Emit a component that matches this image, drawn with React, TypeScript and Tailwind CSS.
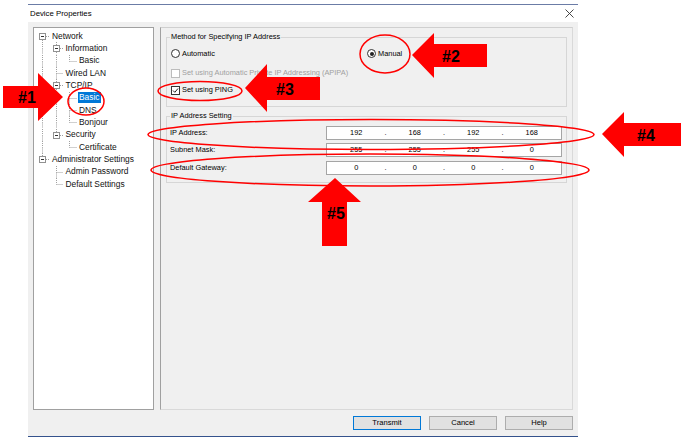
import React from "react";

type Cell = "pipe" | "tee" | "ell" | "blank" | "box-d" | "box-u" | "box-ud";

const TREE: { label: string; cells: Cell[]; selected?: boolean }[] = [
  { label: "Network", cells: ["box-d"] },
  { label: "Information", cells: ["pipe", "box-ud"] },
  { label: "Basic", cells: ["pipe", "pipe", "ell"] },
  { label: "Wired LAN", cells: ["pipe", "tee"] },
  { label: "TCP/IP", cells: ["pipe", "box-ud"] },
  { label: "Basic", cells: ["pipe", "pipe", "tee"], selected: true },
  { label: "DNS", cells: ["pipe", "pipe", "tee"] },
  { label: "Bonjour", cells: ["pipe", "pipe", "ell"] },
  { label: "Security", cells: ["pipe", "box-u"] },
  { label: "Certificate", cells: ["pipe", "blank", "ell"] },
  { label: "Administrator Settings", cells: ["box-u"] },
  { label: "Admin Password", cells: ["blank", "tee"] },
  { label: "Default Settings", cells: ["blank", "ell"] },
];

const W = 13.5;
const H = 12.33;

function TreeCell({ kind }: { kind: Cell }) {
  const cx = 6.5;
  const cy = 6.5;
  const dot = { stroke: "#a0a0a0", strokeWidth: 1, strokeDasharray: "1 1" };
  const isBox = kind.startsWith("box");
  const up = kind === "pipe" || kind === "tee" || kind === "ell" || kind === "box-u" || kind === "box-ud";
  const down = kind === "pipe" || kind === "tee" || kind === "box-d" || kind === "box-ud";
  const right = kind === "tee" || kind === "ell" || isBox;
  return (
    <svg width={W} height={H} className="shrink-0">
      {up && <line x1={cx} y1={0} x2={cx} y2={isBox ? cy - 3.5 : cy} {...dot} />}
      {down && <line x1={cx} y1={isBox ? cy + 3.5 : cy} x2={cx} y2={H} {...dot} />}
      {right && <line x1={isBox ? cx + 3.5 : cx} y1={cy} x2={W} y2={cy} {...dot} />}
      {isBox && (
        <>
          <rect x={cx - 3} y={cy - 3} width={6} height={6} fill="#fff" stroke="#919191" strokeWidth={1} />
          <line x1={cx - 1.5} y1={cy} x2={cx + 1.5} y2={cy} stroke="#333" strokeWidth={1} />
        </>
      )}
    </svg>
  );
}

function Radio({ checked = false }: { checked?: boolean }) {
  return (
    <span className="flex h-[9px] w-[9px] items-center justify-center rounded-full border border-[#333] bg-white">
      {checked && <span className="h-[4px] w-[4px] rounded-full bg-[#222]" />}
    </span>
  );
}

function Check({ checked = false, disabled = false }: { checked?: boolean; disabled?: boolean }) {
  return (
    <span
      className={`flex h-[9px] w-[9px] items-center justify-center border bg-white ${
        disabled ? "border-[#bcbcbc]" : "border-[#333]"
      }`}
    >
      {checked && (
        <svg width="7" height="7" viewBox="0 0 7 7">
          <path d="M1 3.5 L2.8 5.3 L6 1.5" fill="none" stroke="#222" strokeWidth="1" />
        </svg>
      )}
    </span>
  );
}

function IpBox({ values }: { values: string[] }) {
  return (
    <div className="flex h-[14px] w-[236px] items-center border border-[#a5a5a5] bg-white">
      {values.map((v, i) => (
        <React.Fragment key={i}>
          {i > 0 && <span className="flex w-0 justify-center">.</span>}
          <span className="flex-1 text-center">{v}</span>
        </React.Fragment>
      ))}
    </div>
  );
}

function Button({ label, primary = false }: { label: string; primary?: boolean }) {
  return (
    <button
      type="button"
      className={`h-[14px] w-[68px] bg-[#e1e1e1] text-[7.6px] leading-none ${
        primary ? "border border-[#0078d7]" : "border border-[#adadad]"
      }`}
    >
      {label}
    </button>
  );
}

function Annotations() {
  const red = "#ff0000";
  const txt = { fontFamily: "'Liberation Sans', Arial, sans-serif", fontWeight: 700, fontSize: 16, fill: "#000" };
  return (
    <svg className="pointer-events-none absolute inset-0" width="691" height="441">
      <g fill="none" stroke={red} strokeWidth="1.5">
        <ellipse cx="86" cy="101.5" rx="18" ry="13.5" />
        <ellipse cx="385" cy="54" rx="25" ry="19" />
        <ellipse cx="200" cy="91" rx="42" ry="9.5" />
        <ellipse cx="371" cy="134.5" rx="223" ry="15" />
        <ellipse cx="370" cy="170" rx="219" ry="16" />
      </g>
      <g fill={red}>
        <polygon points="3,86 38,86 38,73 63,97 38,121 38,108 3,108" />
        <polygon points="412,55 434,33 434,44 487,44 487,67 434,67 434,78" />
        <polygon points="245,88 267,64 267,77 320,77 320,100 267,100 267,112" />
        <polygon points="602,134 624,112 624,123 681,123 681,146 624,146 624,157" />
        <polygon points="335,178 361,202 347,202 347,246 322,246 322,202 308,202" />
      </g>
      <g textAnchor="middle" dominantBaseline="central">
        <text x="27" y="97.5" {...txt}>#1</text>
        <text x="451" y="56" {...txt}>#2</text>
        <text x="285" y="89" {...txt}>#3</text>
        <text x="646" y="135" {...txt}>#4</text>
        <text x="336" y="213" {...txt}>#5</text>
      </g>
    </svg>
  );
}

export default function App() {
  return (
    <div className="relative h-[441px] w-[691px] overflow-hidden bg-white font-['Liberation_Sans',Arial,sans-serif] text-black">
      <div className="ml-[28px] w-[550px] pt-[4px]">
        {/* title bar */}
        <div className="flex h-[18px] items-center justify-between border-t border-[#6b7ca6] bg-white pl-[2px] pr-[4px]">
          <span className="text-[7.8px] leading-none">Device Properties</span>
          <svg width="9" height="9" viewBox="0 0 9 9">
            <path d="M0.5 0.5 L8.5 8.5 M8.5 0.5 L0.5 8.5" stroke="#333" strokeWidth="0.9" />
          </svg>
        </div>

        <div className="h-[415px] border-b border-[#34528c] bg-[#f0f0f0] px-[5px] pt-[5px]">
          <div className="flex h-[383px] gap-[6px]">
            {/* tree */}
            <div className="w-[121px] border border-[#a0a0a0] bg-white pl-[2px] pt-[2px] text-[8.4px]">
              {TREE.map((item, i) => (
                <div key={i} className="flex h-[12.33px] items-center">
                  {item.cells.map((c, j) => (
                    <TreeCell key={j} kind={c} />
                  ))}
                  <span
                    className={`ml-[1px] whitespace-nowrap px-[1.5px] leading-[11px] ${
                      item.selected ? "bg-[#0078d7] text-white" : "text-[#111]"
                    }`}
                  >
                    {item.label}
                  </span>
                </div>
              ))}
            </div>

            {/* settings */}
            <div className="w-[413px] border border-[#d9d9d9] border-l-[#a0a0a0] border-t-[#cfcfcf] px-[5px] pt-[4px] text-[7.4px]">
              <fieldset className="border border-[#d6d6d6] pb-[9px] pl-[4px] pr-[4px]">
                <legend className="-ml-[1px] px-[1px] leading-[10px]">Method for Specifying IP Address</legend>
                <div className="mt-[5px] flex h-[14px] items-center">
                  <div className="flex w-[196px] items-center gap-[2px]">
                    <Radio />
                    <span>Automatic</span>
                  </div>
                  <div className="flex items-center gap-[2px]">
                    <Radio checked />
                    <span>Manual</span>
                  </div>
                </div>
                <div className="mt-[5px] flex h-[14px] items-center gap-[2px] text-[#a0a0a0]">
                  <Check disabled />
                  <span>Set using Automatic Private IP Addressing (APIPA)</span>
                </div>
                <div className="mt-[3px] flex h-[14px] items-center gap-[2px]">
                  <Check checked />
                  <span>Set using PING</span>
                </div>
              </fieldset>

              <fieldset className="mt-[4px] border border-[#d6d6d6] pb-[7px] pl-[3px] pr-[4px]">
                <legend className="px-[1px] leading-[10px]">IP Address Setting</legend>
                <div className="mt-[5px] flex items-center justify-between">
                  <span>IP Address:</span>
                  <IpBox values={["192", "168", "192", "168"]} />
                </div>
                <div className="mt-[3px] flex items-center justify-between">
                  <span>Subnet Mask:</span>
                  <IpBox values={["255", "255", "255", "0"]} />
                </div>
                <div className="mt-[4px] flex items-center justify-between">
                  <span>Default Gateway:</span>
                  <IpBox values={["0", "0", "0", "0"]} />
                </div>
              </fieldset>
            </div>
          </div>

          <div className="mt-[6px] flex justify-end gap-[8px]">
            <Button label="Transmit" primary />
            <Button label="Cancel" />
            <Button label="Help" />
          </div>
        </div>
      </div>
      <Annotations />
    </div>
  );
}
